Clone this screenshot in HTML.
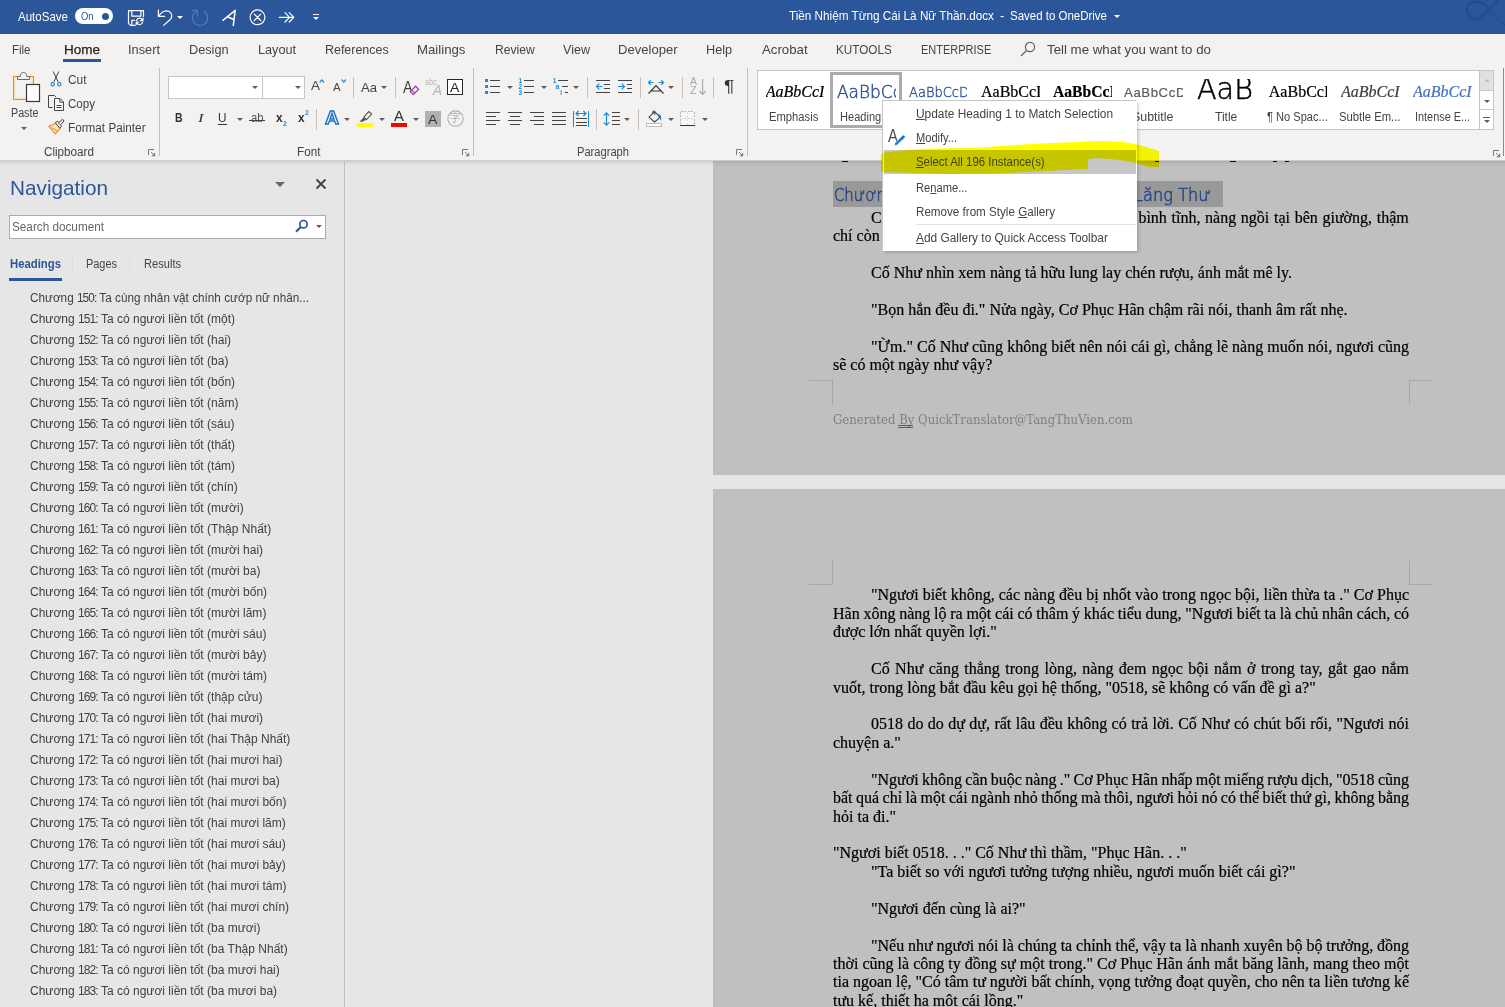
<!DOCTYPE html>
<html lang="vi"><head><meta charset="utf-8"><title>Word</title>
<style>
html,body{margin:0;padding:0}
html{overflow:hidden;width:1505px;height:1007px}
body{width:1505px;height:1007px;overflow:hidden;position:relative;background:#e6e6e6;font-family:"Liberation Sans",sans-serif;font-size:12px;color:#444}
.a{position:absolute}
.t{position:absolute;white-space:nowrap;line-height:16px;height:16px;transform-origin:0 0}
svg{position:absolute;overflow:visible}
#title{left:0;top:0;width:1505px;height:34px;background:#2b579a}
#title .t{color:#fff;font-size:13px}
#ribbon{left:0;top:34px;width:1505px;height:126px;background:#f3f2f1}
#shadow{left:0;top:161px;width:1505px;height:5px;background:linear-gradient(rgba(0,0,0,.115),rgba(0,0,0,.08) 20%,rgba(0,0,0,.048) 40%,rgba(0,0,0,.027) 60%,rgba(0,0,0,.015) 80%,rgba(0,0,0,.004))}
#rline{left:0;top:160px;width:1505px;height:1px;background:#cfcdcb}
.tab{font-size:13.4px;color:#444}
.lbl{font-size:12px;color:#444}
.ic{color:#444}
.pv{line-height:20px;height:20px;color:#000;-webkit-text-stroke:0.2px}
.vsep{position:absolute;width:1px;background:#c2bfbc}
.dd{position:absolute;width:0;height:0;border-left:3px solid transparent;border-right:3px solid transparent;border-top:3px solid #605e5c}
#nav{left:0;top:162px;width:344px;height:845px;background:#e6e6e6;border-right:1px solid #c0c0c0}
.nv{font-size:12px;color:#404040;left:30px;letter-spacing:0.01px}
.nv i{font-style:normal;letter-spacing:-0.9px}
.page{position:absolute;left:713px;width:792px;background:#c0c0c0}
.ln{position:absolute;left:833px;width:576px;height:19px;line-height:19px;font-family:"Liberation Serif",serif;font-size:16px;color:#000;white-space:nowrap;text-align:justify;text-align-last:justify;-webkit-text-stroke:0.2px #000}
.ln.i{left:871px;width:538px}
.ln.e{text-align:left;text-align-last:left}
.hd{font-family:'DejaVu Sans',sans-serif;font-weight:200;font-size:18.4px;line-height:26px;height:26px;color:#264785;-webkit-text-stroke:0.6px #264785}
.ft{font-family:"DejaVu Serif",serif;font-size:12px;color:#7f7f7f}
.crop{position:absolute;border:0 solid #a6a6a6}
#menu{left:882px;top:100px;width:255px;height:151px;background:#fff;box-sizing:border-box;border:1px solid #c6c6c6;border-right-color:#fff;border-bottom-color:#fff;box-shadow:1.5px 1.5px 3px rgba(0,0,0,.2)}
.mi{font-size:12.3px;color:#444;left:916px}
u{text-decoration:underline;text-underline-offset:1px}
</style></head><body>

<!-- ===== TITLE BAR ===== -->
<div id="title" class="a"></div>
<span class="t" style="left: 18px; top: 9.3px; color: rgb(255, 255, 255); font-size: 13px; transform: scaleX(0.887);">AutoSave</span>
<span class="t" style="left: 789px; top: 8.4px; color: rgb(255, 255, 255); font-size: 13px; transform: scaleX(0.901);">Tiền Nhiệm Từng Cái Là Nữ Thần.docx</span>
<span class="t" style="left:1000px;top:8.4px;color:#fff;font-size:13px">-</span>
<span class="t" style="left: 1010px; top: 8.4px; color: rgb(255, 255, 255); font-size: 13px; transform: scaleX(0.883);">Saved to OneDrive</span>

<div class="a" style="left:75px;top:8px;width:38px;height:16px;border-radius:8px;background:#fff"></div>
<span class="t" style="left: 80.7px; top: 8.3px; font-size: 10.5px; color: rgb(43, 87, 154); transform: scaleX(0.899);">On</span>
<div class="a" style="left:102px;top:12.5px;width:7px;height:7px;border-radius:4px;background:#2b579a"></div>
<svg style="left:0;top:0" width="330" height="34" viewBox="0 0 330 34" fill="none" stroke="#fff" stroke-width="1.2" stroke-linecap="round" stroke-linejoin="round">
<path d="M135.2 25.3H130.4L128.5 23.4V10.7H143.5V16.4"></path><path d="M131.8 10.9V16.2H140.9V10.9"></path><path d="M131.8 25V20.3H134.6"></path>
<path d="M136.5 20.4A3.2 3.2 0 0 1 142.6 20.2M143 18V20.6H140.4"></path><path d="M142.7 22.2A3.2 3.2 0 0 1 136.6 22.4M136.2 24.6V22H138.8"></path>
<path d="M158.4 10.2V16.4H164.6"></path><path d="M158.9 16C161 12 165.6 9.6 169.2 11.6C172.6 13.6 172.4 17.4 170 19.8L163.6 25.4"></path>
<path d="M192 10.4H197.5V15.8M197.3 10.8A7.6 7.6 0 1 0 204.3 11.6" stroke="#4f7cb8"></path>
<path d="M222.9 20.3L235.2 10.4L233.3 25.5M227.4 16.8L233.9 19.5" stroke-width="1.5"></path>
<circle cx="257.5" cy="17.3" r="7.4"></circle><path d="M254.3 14.1L260.7 20.5M260.7 14.1L254.3 20.5"></path>
<path d="M279.4 17.3H293.6M285 12.6L289.6 17.3L285 22M289.2 12.6L293.8 17.3L289.2 22"></path>
</svg>
<div class="dd" style="left:176.5px;top:15.5px;border-top-color:#fff"></div>
<div class="a" style="left:313px;top:13.5px;width:6px;height:1px;background:#fff"></div>
<div class="dd" style="left:313px;top:16.5px;border-top-color:#fff"></div>
<div class="dd" style="left:1113.5px;top:15px;border-top-color:#fff"></div>
<svg style="left:0;top:0" width="1505" height="34" viewBox="0 0 1505 34" fill="none" stroke="#254d8e"><path d="M1499 -1C1495 4 1492 7 1489.2 9.3C1485 13.5 1481 19 1476.3 19C1470 19 1466.8 14.5 1466.8 9.5C1466.8 4.5 1471 1.5 1476.3 1.5C1481.5 1.5 1486 5.5 1489.2 9.3" stroke-width="2.4"></path><path d="M1489.2 9.3C1493 14.5 1498 21.5 1506 25.5" stroke-width="1.6"></path></svg><div class="a" style="left:0;top:33px;width:1505px;height:1px;background:#224f98"></div><div class="a" style="left:0;top:34px;width:1505px;height:1px;background:#fbfbfb;z-index:1"></div>
<!-- ===== RIBBON ===== -->
<div id="ribbon" class="a"></div>
<!-- tabs -->
<span class="t tab" style="left: 12px; top: 42.3px; transform: scaleX(0.857);">File</span>
<span class="t tab" style="left: 63.5px; top: 42.3px; color: rgb(34, 34, 34); -webkit-text-stroke: 0.25px rgb(34, 34, 34); transform: scaleX(1.007);">Home</span>
<span class="t tab" style="left: 128px; top: 42.3px; transform: scaleX(0.955);">Insert</span>
<span class="t tab" style="left: 189px; top: 42.3px; transform: scaleX(0.95);">Design</span>
<span class="t tab" style="left: 258px; top: 42.3px; transform: scaleX(0.945);">Layout</span>
<span class="t tab" style="left: 325px; top: 42.3px; transform: scaleX(0.929);">References</span>
<span class="t tab" style="left: 417.3px; top: 42.3px; transform: scaleX(0.987);">Mailings</span>
<span class="t tab" style="left: 495.2px; top: 42.3px; transform: scaleX(0.906);">Review</span>
<span class="t tab" style="left: 563px; top: 42.3px; transform: scaleX(0.938);">View</span>
<span class="t tab" style="left: 618.3px; top: 42.3px; transform: scaleX(0.975);">Developer</span>
<span class="t tab" style="left: 706.2px; top: 42.3px; transform: scaleX(0.951);">Help</span>
<span class="t tab" style="left: 762.1px; top: 42.3px; transform: scaleX(0.988);">Acrobat</span>
<span class="t tab" style="left: 836px; top: 42.3px; transform: scaleX(0.874);">KUTOOLS</span>
<span class="t tab" style="left: 920.5px; top: 42.3px; transform: scaleX(0.821);">ENTERPRISE</span>
<span class="t tab" style="left: 1047.3px; top: 42.3px; transform: scaleX(0.992);">Tell me what you want to do</span>
<div class="a" style="left:63px;top:59px;width:38px;height:3px;background:#2b579a"></div>
<svg style="left:1020px;top:41px" width="16" height="16" viewBox="0 0 16 16"><circle cx="10" cy="6" r="4.6" fill="none" stroke="#605e5c" stroke-width="1.2"></circle><path d="M6.6 9.4L1 15" stroke="#605e5c" stroke-width="1.3"></path></svg>
<!-- /tabs -->
<!-- clipboard -->
<svg style="left:12px;top:71px" width="29" height="32" viewBox="0 0 29 32">
<rect x="1.5" y="5.5" width="20" height="23" fill="#fbe5b8" stroke="#e8873a" stroke-width="1"></rect>
<rect x="3.5" y="7.5" width="16" height="19" fill="#f3f2f1"></rect>
<path d="M5.5 8.5V5.5H8.2C8.2 3 9.6 1.5 11.5 1.5C13.4 1.5 14.8 3 14.8 5.5H17.5V8.5Z" fill="#f3f2f1" stroke="#6a6a6a" stroke-width="1"></path>
<rect x="14.5" y="13.5" width="13" height="17" fill="#fdfdfd" stroke="#3b3a39" stroke-width="1.2"></rect>
</svg>
<span class="t lbl" style="left: 10.6px; top: 104.5px; transform: scaleX(0.893);">Paste</span>
<div class="dd" style="left:21px;top:127px"></div>
<svg style="left:50px;top:71px" width="12" height="16" viewBox="0 0 12 16">
<path d="M3.2 0.5L8.3 11.2M8.8 0.5L3.7 11.2" stroke="#444" stroke-width="1" fill="none"></path>
<circle cx="2.7" cy="13.3" r="1.7" fill="none" stroke="#1e8ad6" stroke-width="1.1"></circle><circle cx="9.3" cy="13.3" r="1.7" fill="none" stroke="#1e8ad6" stroke-width="1.1"></circle>
</svg>
<span class="t lbl" style="left: 67.5px; top: 71.5px; transform: scaleX(0.99);">Cut</span>
<svg style="left:47px;top:94px" width="18" height="18" viewBox="0 0 18 18">
<path d="M5.5 13.5H1.5V1.5H7.5L9 3" fill="none" stroke="#444" stroke-width="1"></path>
<path d="M7.5 4.5H13L16.5 8V16.5H7.5Z" fill="#fafafa" stroke="#444" stroke-width="1"></path>
<path d="M12.8 4.7V8.2H16.3" fill="none" stroke="#444" stroke-width="1"></path>
<path d="M9.5 11.5H14.5M9.5 13.5H14.5" stroke="#444" stroke-width="1"></path>
</svg>
<span class="t lbl" style="left: 67.5px; top: 95.5px; transform: scaleX(0.964);">Copy</span>
<svg style="left:48px;top:118px" width="17" height="17" viewBox="0 0 17 17">
<path d="M0.8 8.5L8 5.2L12.2 10.4L7.2 15.8Z" fill="#fbe5b8" stroke="#e8873a" stroke-width="1.1" stroke-linejoin="round"></path>
<path d="M3 9.3L9 12.8" stroke="#e8873a" stroke-width="1"></path>
<path d="M7.3 4.6L9.6 3.2L13.6 8.4L11.8 10.2Z" fill="#f3f2f1" stroke="#444" stroke-width="1"></path>
<path d="M10.8 4.6L14.6 1.2L16 3L12.6 6.8" fill="#f3f2f1" stroke="#444" stroke-width="1"></path>
</svg>
<span class="t lbl" style="left: 67.5px; top: 119.5px; transform: scaleX(0.977);">Format Painter</span>
<span class="t lbl" style="left: 43.6px; top: 143.5px; transform: scaleX(0.973);">Clipboard</span>
<svg style="left:148px;top:149px" width="8" height="8" viewBox="0 0 8 8"><path d="M0.5 6V0.5H6" fill="none" stroke="#777" stroke-width="1"></path><path d="M7.2 3.4V7.2H3.4Z" fill="#777"></path><path d="M3 3L5.5 5.5" stroke="#777" stroke-width="1"></path></svg>
<div class="vsep" style="left:159px;top:68px;height:88px"></div>
<!-- /clipboard -->
<!-- font -->
<div class="a" style="left:168px;top:76px;width:93px;height:21px;background:#fff;border:1px solid #c6c6c6"></div>
<div class="a" style="left:262px;top:76px;width:41px;height:21px;background:#fff;border:1px solid #c6c6c6"></div>
<div class="dd" style="left:251.5px;top:86px"></div>
<div class="dd" style="left:294.5px;top:86px"></div>
<span class="t ic" style="left: 311px; top: 78px; font-size: 13px; transform: scaleX(1.038);">A</span>
<svg style="left:319px;top:79px" width="6" height="4" viewBox="0 0 6 4"><path d="M0.6 3.5L2.8 0.9L5 3.5" fill="none" stroke="#1e8ad6" stroke-width="1.2"></path></svg>
<span class="t ic" style="left: 333px; top: 79.4px; font-size: 11px; transform: scaleX(1.035);">A</span>
<svg style="left:341px;top:79px" width="6" height="4" viewBox="0 0 6 4"><path d="M0.6 0.5L2.8 3.1L5 0.5" fill="none" stroke="#1e8ad6" stroke-width="1.2"></path></svg>
<div class="vsep" style="left:353px;top:77px;height:21px"></div>
<span class="t ic" style="left: 361.3px; top: 79.7px; font-size: 13.5px; transform: scaleX(0.969);">Aa</span>
<div class="dd" style="left:380.5px;top:86px"></div>
<div class="vsep" style="left:395px;top:77px;height:21px"></div>
<span class="t ic" style="left: 403px; top: 77.7px; font-size: 16px; line-height: 19px; transform: scaleX(0.9);">A</span>
<svg style="left:409px;top:85px" width="11" height="11" viewBox="0 0 11 11"><path d="M1.2 6.6L6.6 1.2L9.6 4.2L4.2 9.6Z" fill="#f3f2f1" stroke="#a040b0" stroke-width="1.3"></path><path d="M2.8 5.2L5.8 8.2" stroke="#a040b0" stroke-width="1.2"></path></svg>
<span class="t" style="left: 424.7px; top: 73.5px; font-size: 8.5px; color: rgb(180, 180, 180); transform: scaleX(0.875);">abc</span>
<span class="t" style="left: 432.5px; top: 82.4px; font-size: 14px; font-style: italic; color: rgb(180, 180, 180); transform: scaleX(0.963);">A</span>
<div class="a" style="left:447px;top:79px;width:14px;height:14px;background:#fff;border:1px solid #262626"></div>
<span class="t ic" style="left: 449.8px; top: 79.5px; font-size: 12.5px; color: rgb(38, 38, 38); transform: scaleX(1.127);">A</span>
<!-- row 2 -->
<span class="t ic" style="left: 175.4px; top: 110px; font-size: 12.6px; font-weight: bold; color: rgb(51, 51, 51); transform: scaleX(0.834);">B</span>
<span class="t ic" style="left: 198.4px; top: 110px; font-size: 13px; font-style: italic; font-family: &quot;Liberation Serif&quot;, serif; color: rgb(51, 51, 51); transform: scaleX(1.289);">I</span>
<span class="t ic" style="left: 218.3px; top: 110px; font-size: 12.6px; color: rgb(51, 51, 51); transform: scaleX(0.933);">U</span>
<div class="a" style="left:218px;top:124px;width:9px;height:1px;background:#333"></div>
<div class="dd" style="left:236.5px;top:118px"></div>
<span class="t ic" style="left: 250.5px; top: 110px; font-size: 12.6px; color: rgb(85, 85, 85); transform: scaleX(0.892);">ab</span>
<div class="a" style="left:249px;top:120px;width:16px;height:1px;background:#444"></div>
<span class="t ic" style="left: 275.8px; top: 109.8px; font-size: 13px; font-weight: bold; color: rgb(51, 51, 51); transform: scaleX(0.912);">x</span>
<span class="t" style="left: 282.8px; top: 116.4px; font-size: 8px; font-weight: bold; color: rgb(30, 138, 214); transform: scaleX(0.853);">2</span>
<span class="t ic" style="left: 297.6px; top: 109.8px; font-size: 13px; font-weight: bold; color: rgb(51, 51, 51); transform: scaleX(0.912);">x</span>
<span class="t" style="left: 304.6px; top: 104.8px; font-size: 8px; font-weight: bold; color: rgb(30, 138, 214); transform: scaleX(0.853);">2</span>
<div class="vsep" style="left:316px;top:109px;height:21px"></div>
<span class="t" style="left: 324.6px; top: 107.4px; font-size: 18.6px; line-height: 22px; font-weight: bold; color: rgb(230, 241, 251); -webkit-text-stroke: 1.3px rgb(26, 111, 196); transform: scaleX(1.042);">A</span>
<div class="dd" style="left:343.5px;top:118px"></div>
<svg style="left:357px;top:110px" width="17" height="18" viewBox="0 0 17 18"><rect x="0" y="13" width="16.2" height="4" fill="#ffff00"></rect><path d="M6.8 7.2L11.8 1.6L14.6 4L9.6 9.6Z" fill="#f3f2f1" stroke="#555" stroke-width="1.1"></path><path d="M6.6 7.4L9.4 9.8L5.4 11.8L2.5 11.8Z" fill="#555"></path></svg>
<div class="dd" style="left:378.5px;top:118px"></div>
<span class="t ic" style="left: 394.2px; top: 107.8px; font-size: 14.5px; color: rgb(51, 51, 51); transform: scaleX(1.034);">A</span>
<div class="a" style="left:391px;top:123px;width:16px;height:4px;background:#ff0000"></div>
<div class="dd" style="left:412.5px;top:118px"></div>
<div class="a" style="left:425px;top:111px;width:16px;height:16px;background:#b1b1b1"></div>
<span class="t ic" style="left: 428.3px; top: 111.6px; font-size: 13px; color: rgb(51, 51, 51); transform: scaleX(1.084);">A</span>
<svg style="left:446.5px;top:110px" width="17" height="17" viewBox="0 0 17 17"><circle cx="8.5" cy="8.6" r="7.7" fill="none" stroke="#b0b0b0" stroke-width="1.1"></circle></svg>
<span class="t" style="left:449.3px;top:110.3px;font-size:11.5px;font-family:'Liberation Sans','Noto Sans CJK SC',sans-serif;color:#b0b0b0">字</span>
<span class="t lbl" style="left: 296.6px; top: 144px; transform: scaleX(0.974);">Font</span>
<svg style="left:462px;top:149px" width="8" height="8" viewBox="0 0 8 8"><path d="M0.5 6V0.5H6" fill="none" stroke="#777" stroke-width="1"></path><path d="M7.2 3.4V7.2H3.4Z" fill="#777"></path><path d="M3 3L5.5 5.5" stroke="#777" stroke-width="1"></path></svg>
<div class="vsep" style="left:473px;top:68px;height:88px"></div>
<!-- /font -->
<!-- para -->
<svg style="left:0;top:0" width="760" height="160" viewBox="0 0 760 160" shape-rendering="crispEdges">
<path d="M490 80.5H500M490 86.5H500M490 92.5H500" stroke="#444" stroke-width="1" fill="none"></path>
<rect x="485" y="79" width="3" height="3" fill="#1e8ad6"></rect>
<rect x="485" y="85" width="3" height="3" fill="#1e8ad6"></rect>
<rect x="485" y="91" width="3" height="3" fill="#1e8ad6"></rect>
<path d="M524 80.5H534M524 86.5H534M524 92.5H534" stroke="#444" stroke-width="1" fill="none"></path>
<path d="M558 80.5H568M562 86.5H568M564.5 92.5H568" stroke="#444" stroke-width="1" fill="none"></path>
<path d="M596 80.5H610M604 84.5H610M604 88.5H610M596 92.5H610" stroke="#444" stroke-width="1" fill="none"></path>
<path d="M618 80.5H632M627 84.5H632M627 88.5H632M618 92.5H632" stroke="#444" stroke-width="1" fill="none"></path>
<path d="M486 112.5H500M486 116.5H496M486 120.5H500M486 124.5H496" stroke="#444" stroke-width="1" fill="none"></path>
<path d="M508 112.5H522M510 116.5H520M508 120.5H522M510 124.5H520" stroke="#444" stroke-width="1" fill="none"></path>
<path d="M530 112.5H544M534 116.5H544M530 120.5H544M534 124.5H544" stroke="#444" stroke-width="1" fill="none"></path>
<path d="M552 112.5H566M552 116.5H566M552 120.5H566M552 124.5H566" stroke="#444" stroke-width="1" fill="none"></path>
<path d="M573.5 111V127M588.5 111V127" stroke="#1e8ad6" stroke-width="1" fill="none"></path>
<path d="M575.5 118.5H587M575.5 122.5H587M575.5 125.5H587" stroke="#444" stroke-width="1" fill="none"></path>
<path d="M611.5 112.5H620M611.5 116.5H620M611.5 120.5H620M611.5 124.5H620" stroke="#444" stroke-width="1" fill="none"></path>
<path d="M680.5 111.5H694.5M680.5 111.5V125M694.5 111.5V125M687.5 112V125M680.5 118.5H694.5" stroke="#b8b8b8" stroke-width="1" fill="none" stroke-dasharray="2 1.5"></path>
<rect x="681" y="112" width="13" height="13" fill="#fafafa" opacity="0.5"></rect>
<path d="M680 125.5H695" stroke="#333" stroke-width="1" fill="none"></path>
<rect x="646.5" y="123.5" width="15" height="3" fill="#fff" stroke="#bdbdbd" stroke-width="1"></rect>
</svg>
<svg style="left:0;top:0" width="760" height="160" viewBox="0 0 760 160">
<path d="M602.5 86.5H596.5M599.3 83.7L596.5 86.5L599.3 89.3" stroke="#1e8ad6" stroke-width="1.2" fill="none"></path>
<path d="M618 86.5H624.5M621.7 83.7L624.5 86.5L621.7 89.3" stroke="#1e8ad6" stroke-width="1.2" fill="none"></path>
<path d="M576 113.5H586M578.6 111L576 113.5L578.6 116M583.4 111L586 113.5L583.4 116" stroke="#1e8ad6" stroke-width="1.2" fill="none"></path>
<path d="M606.5 113V125M603.8 115.6L606.5 112.8L609.2 115.6M603.8 122.4L606.5 125.2L609.2 122.4" stroke="#1e8ad6" stroke-width="1.2" fill="none"></path>
<path d="M653.5 82.5H648.5M650.8 80.2L648.5 82.5L650.8 84.8M658.5 82.5H663.5M661.2 80.2L663.5 82.5L661.2 84.8" stroke="#1e8ad6" stroke-width="1.2" fill="none"></path>
<path d="M648.5 93.5L656 85.5L663.5 93.5M651.3 91H660.7" stroke="#333" stroke-width="1.1" fill="none" stroke-linejoin="miter"></path>
<path d="M702.6 79V94.2M699.4 91L702.6 94.4L705.8 91" stroke="#a8a8a8" stroke-width="1.1" fill="none"></path>
<path d="M649 117.2L654.6 111.6L660.2 117.2L654.6 122Z" fill="#f3f2f1" stroke="#444" stroke-width="1.1" stroke-linejoin="round"></path>
<path d="M654.8 115V111.8C654.8 110.4 652.8 110.4 652.8 111.8V114" fill="none" stroke="#444" stroke-width="1"></path>
<path d="M658.6 114.2C661.2 114.6 661.6 117.6 661 121C660.2 118.6 659.6 117.2 658 116.4Z" fill="#1a6fc4"></path>
</svg>
<span class="t" style="left:518.6px;top:73.2px;font-size:6.5px;font-weight:bold;color:#1e8ad6">1</span><span class="t" style="left:518.6px;top:79.2px;font-size:6.5px;font-weight:bold;color:#1e8ad6">2</span><span class="t" style="left:518.6px;top:85.2px;font-size:6.5px;font-weight:bold;color:#1e8ad6">3</span>
<span class="t" style="left:552.8px;top:73.2px;font-size:6.5px;font-weight:bold;color:#1e8ad6">1</span><span class="t" style="left:555.4px;top:79px;font-size:7px;font-weight:bold;color:#1e8ad6">a</span><span class="t" style="left:560.2px;top:85.2px;font-size:6.5px;font-weight:bold;color:#1e8ad6">i</span>
<span class="t" style="left: 689.8px; top: 73.8px; font-size: 10px; color: rgb(168, 168, 168); transform: scaleX(1.049);">A</span><span class="t" style="left: 690px; top: 83.2px; font-size: 10px; color: rgb(168, 168, 168); transform: scaleX(1.08);">Z</span>
<span class="t" style="left: 723.6px; top: 77px; font-size: 17px; line-height: 20px; height: 20px; color: rgb(51, 51, 51); transform: scaleX(1.138);">¶</span>
<div class="dd" style="left:506.5px;top:86px"></div>
<div class="dd" style="left:540.5px;top:86px"></div>
<div class="dd" style="left:572.5px;top:86px"></div>
<div class="dd" style="left:667.5px;top:86px"></div>
<div class="dd" style="left:623.5px;top:118px"></div>
<div class="dd" style="left:667.5px;top:118px"></div>
<div class="dd" style="left:701.5px;top:118px"></div>
<div class="vsep" style="left:587px;top:77px;height:21px"></div>
<div class="vsep" style="left:640px;top:77px;height:21px"></div>
<div class="vsep" style="left:682px;top:77px;height:21px"></div>
<div class="vsep" style="left:713px;top:77px;height:21px"></div>
<div class="vsep" style="left:596px;top:109px;height:21px"></div>
<div class="vsep" style="left:638px;top:109px;height:21px"></div>
<span class="t lbl" style="left: 576.7px; top: 144px; transform: scaleX(0.928);">Paragraph</span>
<svg style="left:736px;top:149px" width="8" height="8" viewBox="0 0 8 8"><path d="M0.5 6V0.5H6" fill="none" stroke="#777" stroke-width="1"></path><path d="M7.2 3.4V7.2H3.4Z" fill="#777"></path><path d="M3 3L5.5 5.5" stroke="#777" stroke-width="1"></path></svg>
<div class="vsep" style="left:747px;top:68px;height:88px"></div>
<!-- /para -->
<!-- styles -->
<div class="a" style="left:757px;top:70px;width:735px;height:58px;background:#fff;border:1px solid #c6c6c6"></div>
<div class="a" style="left:1479px;top:70px;width:13px;height:20px;background:#e1e1e1;border:1px solid #c6c6c6"></div>
<div class="a" style="left:1479px;top:90px;width:13px;height:19px;background:#fff;border:1px solid #c6c6c6"></div>
<div class="a" style="left:1479px;top:109px;width:13px;height:19px;background:#fff;border:1px solid #c6c6c6"></div>
<div class="a" style="left:1483.5px;top:79px;width:0;height:0;border-left:3px solid transparent;border-right:3px solid transparent;border-bottom:3px solid #c0c0c0"></div>
<div class="dd" style="left:1483.5px;top:100px"></div>
<div class="a" style="left:1483px;top:117px;width:7px;height:1px;background:#605e5c"></div>
<div class="dd" style="left:1483.5px;top:120px"></div>
<div class="a" style="left:830px;top:72px;width:66px;height:50px;border:3px solid #ababab"></div>
<div class="a" style="left:765.7px;top:78px;width:58.5px;height:26px;overflow:hidden"><span class="t pv" style="left:0;top:4px;font-family:'Liberation Serif',serif;font-style:italic;font-size:16px">AaBbCcI</span></div>
<div class="a" style="left:837px;top:78px;width:58.5px;height:26px;overflow:hidden"><span class="t pv" style="left: 0px; top: 4px; font-family: &quot;DejaVu Sans&quot;, sans-serif; font-weight: 200; font-size: 17.3px; color: rgb(47, 84, 150); -webkit-text-stroke: 0.5px rgb(47, 84, 150); transform: scaleX(0.981);">AaBbCc</span></div>
<div class="a" style="left:908.6px;top:78px;width:58.5px;height:26px;overflow:hidden"><span class="t pv" style="left: 0px; top: 4px; font-family: &quot;DejaVu Sans&quot;, sans-serif; font-weight: 200; font-size: 13.9px; color: rgb(47, 84, 150); -webkit-text-stroke: 0.4px rgb(47, 84, 150); transform: scaleX(0.938);">AaBbCcD</span></div>
<div class="a" style="left:981px;top:78px;width:58.5px;height:26px;overflow:hidden"><span class="t pv" style="left:0;top:4px;font-family:'Liberation Serif',serif;font-size:16px;color:#000">AaBbCcI</span></div>
<div class="a" style="left:1053px;top:78px;width:58.5px;height:26px;overflow:hidden"><span class="t pv" style="left: 0px; top: 4px; font-family: &quot;Liberation Serif&quot;, serif; font-weight: bold; font-size: 16px; color: rgb(0, 0, 0); transform: scaleX(0.976);">AaBbCcI</span></div>
<div class="a" style="left:1124.4px;top:78px;width:58.5px;height:26px;overflow:hidden"><span class="t pv" style="left: 0px; top: 4.6px; font-size: 13px; color: rgb(90, 90, 90); letter-spacing: 0.6px; transform: scaleX(1.012);">AaBbCcD</span></div>
<div class="a" style="left:1196.6px;top:78.8px;width:58.5px;height:24px;overflow:hidden"><span class="t" style="left: 0px; top: -9.5px; font-family: &quot;DejaVu Sans&quot;, sans-serif; font-weight: 200; font-size: 31px; line-height: 38px; height: 38px; color: rgb(0, 0, 0); -webkit-text-stroke: 0.5px rgb(0, 0, 0); transform: scaleX(0.925);">AaB</span></div>
<div class="a" style="left:1268.8px;top:78px;width:58.5px;height:26px;overflow:hidden"><span class="t pv" style="left:0;top:4px;font-family:'Liberation Serif',serif;font-size:16px;color:#000">AaBbCcI</span></div>
<div class="a" style="left:1341px;top:78px;width:58.5px;height:26px;overflow:hidden"><span class="t pv" style="left:0;top:4px;font-family:'Liberation Serif',serif;font-style:italic;font-size:16px;color:#404040">AaBbCcI</span></div>
<div class="a" style="left:1413px;top:78px;width:58.5px;height:26px;overflow:hidden"><span class="t pv" style="left:0;top:4px;font-family:'Liberation Serif',serif;font-style:italic;font-size:16px;color:#4472c4">AaBbCcI</span></div>
<span class="t lbl" style="left: 769.4px; top: 109px; transform: scaleX(0.936);">Emphasis</span>
<span class="t lbl" style="left: 839.6px; top: 109px; transform: scaleX(0.923);">Heading 1</span>
<span class="t lbl" style="left: 1132.4px; top: 109px; transform: scaleX(1.034);">Subtitle</span>
<span class="t lbl" style="left: 1215px; top: 109px; transform: scaleX(1.003);">Title</span>
<span class="t lbl" style="left: 1267px; top: 109px; transform: scaleX(0.924);">¶ No Spac...</span>
<span class="t lbl" style="left: 1339px; top: 109px; transform: scaleX(0.941);">Subtle Em...</span>
<span class="t lbl" style="left: 1414.5px; top: 109px; transform: scaleX(0.908);">Intense E...</span>
<svg style="left:1493px;top:150px" width="8" height="8" viewBox="0 0 8 8"><path d="M0.5 6V0.5H6" fill="none" stroke="#777" stroke-width="1"></path><path d="M7.2 3.4V7.2H3.4Z" fill="#777"></path><path d="M3 3L5.5 5.5" stroke="#777" stroke-width="1"></path></svg>
<div class="vsep" style="left:1503px;top:68px;height:88px;background:#8a8a8a"></div>
<!-- /styles -->

<!-- ===== NAV ===== -->
<div id="nav" class="a"></div>
<span class="t" style="left: 10px; top: 174px; font-size: 21px; line-height: 28px; height: 28px; color: rgb(43, 87, 154); transform: scaleX(0.988);">Navigation</span>
<div class="a" style="left:275px;top:182px;width:0;height:0;border-left:5px solid transparent;border-right:5px solid transparent;border-top:5px solid #666"></div>
<svg style="left:316px;top:179px" width="10" height="10" viewBox="0 0 10 10"><path d="M0.5 0.5L9.5 9.5M9.5 0.5L0.5 9.5" stroke="#444" stroke-width="1.9" fill="none"></path></svg>
<div class="a" style="left:9px;top:215px;width:315px;height:22px;background:#fff;border:1px solid #ababab"></div>
<span class="t" style="left: 12px; top: 219px; font-size: 12px; color: rgb(102, 102, 102); transform: scaleX(0.978);">Search document</span>
<svg style="left:295px;top:219px" width="14" height="14" viewBox="0 0 14 14"><circle cx="8.5" cy="5.2" r="3.7" fill="none" stroke="#2b579a" stroke-width="1.7"></circle><path d="M5.8 8L1 12.8" stroke="#2b579a" stroke-width="2" fill="none"></path></svg>
<div class="dd" style="left:316px;top:225px"></div>
<span class="t" style="left: 10px; top: 256px; font-size: 12.5px; font-weight: bold; color: rgb(43, 87, 154); transform: scaleX(0.906);">Headings</span>
<div class="a" style="left:9px;top:278px;width:53px;height:3px;background:#2b579a"></div>
<div class="a" style="left:72px;top:253px;width:1px;height:19px;background:#dedede"></div><div class="a" style="left:129px;top:253px;width:1px;height:19px;background:#dedede"></div>
<span class="t" style="left: 86px; top: 256px; font-size: 12.5px; transform: scaleX(0.874);">Pages</span>
<span class="t" style="left: 144px; top: 256px; font-size: 12.5px; transform: scaleX(0.888);">Results</span>
<span class="t nv" style="top: 290px; transform: scaleX(0.978);">Chương <i>150:</i> Ta cùng nhân vật chính cướp nữ nhân...</span>
<span class="t nv" style="top:311px">Chương <i>151:</i> Ta có ngươi liền tốt (một)</span>
<span class="t nv" style="top:332px">Chương <i>152:</i> Ta có ngươi liền tốt (hai)</span>
<span class="t nv" style="top:353px">Chương <i>153:</i> Ta có ngươi liền tốt (ba)</span>
<span class="t nv" style="top:374px">Chương <i>154:</i> Ta có ngươi liền tốt (bốn)</span>
<span class="t nv" style="top:395px">Chương <i>155:</i> Ta có ngươi liền tốt (năm)</span>
<span class="t nv" style="top:416px">Chương <i>156:</i> Ta có ngươi liền tốt (sáu)</span>
<span class="t nv" style="top:437px">Chương <i>157:</i> Ta có ngươi liền tốt (thất)</span>
<span class="t nv" style="top:458px">Chương <i>158:</i> Ta có ngươi liền tốt (tám)</span>
<span class="t nv" style="top:479px">Chương <i>159:</i> Ta có ngươi liền tốt (chín)</span>
<span class="t nv" style="top:500px">Chương <i>160:</i> Ta có ngươi liền tốt (mười)</span>
<span class="t nv" style="top:521px">Chương <i>161:</i> Ta có ngươi liền tốt (Thập Nhất)</span>
<span class="t nv" style="top:542px">Chương <i>162:</i> Ta có ngươi liền tốt (mười hai)</span>
<span class="t nv" style="top:563px">Chương <i>163:</i> Ta có ngươi liền tốt (mười ba)</span>
<span class="t nv" style="top:584px">Chương <i>164:</i> Ta có ngươi liền tốt (mười bốn)</span>
<span class="t nv" style="top:605px">Chương <i>165:</i> Ta có ngươi liền tốt (mười lăm)</span>
<span class="t nv" style="top:626px">Chương <i>166:</i> Ta có ngươi liền tốt (mười sáu)</span>
<span class="t nv" style="top:647px">Chương <i>167:</i> Ta có ngươi liền tốt (mười bảy)</span>
<span class="t nv" style="top:668px">Chương <i>168:</i> Ta có ngươi liền tốt (mười tám)</span>
<span class="t nv" style="top:689px">Chương <i>169:</i> Ta có ngươi liền tốt (thập cửu)</span>
<span class="t nv" style="top:710px">Chương <i>170:</i> Ta có ngươi liền tốt (hai mươi)</span>
<span class="t nv" style="top:731px">Chương <i>171:</i> Ta có ngươi liền tốt (hai Thập Nhất)</span>
<span class="t nv" style="top:752px">Chương <i>172:</i> Ta có ngươi liền tốt (hai mươi hai)</span>
<span class="t nv" style="top:773px">Chương <i>173:</i> Ta có ngươi liền tốt (hai mươi ba)</span>
<span class="t nv" style="top:794px">Chương <i>174:</i> Ta có ngươi liền tốt (hai mươi bốn)</span>
<span class="t nv" style="top:815px">Chương <i>175:</i> Ta có ngươi liền tốt (hai mươi lăm)</span>
<span class="t nv" style="top:836px">Chương <i>176:</i> Ta có ngươi liền tốt (hai mươi sáu)</span>
<span class="t nv" style="top:857px">Chương <i>177:</i> Ta có ngươi liền tốt (hai mươi bảy)</span>
<span class="t nv" style="top:878px">Chương <i>178:</i> Ta có ngươi liền tốt (hai mươi tám)</span>
<span class="t nv" style="top:899px">Chương <i>179:</i> Ta có ngươi liền tốt (hai mươi chín)</span>
<span class="t nv" style="top:920px">Chương <i>180:</i> Ta có ngươi liền tốt (ba mươi)</span>
<span class="t nv" style="top:941px">Chương <i>181:</i> Ta có ngươi liền tốt (ba Thập Nhất)</span>
<span class="t nv" style="top:962px">Chương <i>182:</i> Ta có ngươi liền tốt (ba mươi hai)</span>
<span class="t nv" style="top:983px">Chương <i>183:</i> Ta có ngươi liền tốt (ba mươi ba)</span>

<!-- ===== DOC ===== -->
<div class="page" style="top:160px;height:315px"></div>
<div class="a" style="left:833px;top:181px;width:390px;height:26px;background:#999"></div>
<span class="t hd" style="left: 833.5px; top: 181.5px; transform: scaleX(0.807);">Chương 196: Phiên ngoại Cơ Phục Hãn,</span>
<span class="t hd" style="left: 1134px; top: 181.5px; transform: scaleX(0.882);">Lăng Thư</span>
<div class="ln i e" style="top:207.6px;width:12px">C</div><div class="ln e" style="top:207.6px;left:890px;width:240px">ố Như nhìn thấy Cơ Phục Hãn vẫn rất</div>
<div class="ln " style="top: 207.6px; left: 1138.4px; width: 270.3px;">bình tĩnh, nàng ngồi tại bên giường, thậm</div>
<div class="ln e" style="top:226.1px">chí còn có tâm tình uống rượu.</div>
<div class="ln i e" style="top:262.9px">Cố Như nhìn xem nàng tả hữu lung lay chén rượu, ánh mắt mê ly.</div>
<div class="ln i e" style="top:299.7px">"Bọn hắn đều đi." Nửa ngày, Cơ Phục Hãn chậm rãi nói, thanh âm rất nhẹ.</div>
<div class="ln i" style="top: 336.6px;">"Ừm." Cố Như cũng không biết nên nói cái gì, chẳng lẽ nàng muốn nói, ngươi cũng</div>
<div class="ln e" style="top:355.0px">sẽ có một ngày như vậy?</div>
<div class="crop" style="left:809px;top:380px;width:23px;height:23px;border-right-width:1px;border-top-width:1px"></div>
<div class="crop" style="left:1409px;top:380px;width:23px;height:23px;border-left-width:1px;border-top-width:1px"></div>
<span class="t ft" style="left: 833px; top: 411.8px; transform: scaleX(0.975);">Generated By QuickTranslator@TangThuVien.com</span><div class="a" style="left:898px;top:425px;width:15px;height:1px;background:#2f5fd0"></div><div class="a" style="left:898px;top:427px;width:15px;height:1px;background:#2f5fd0"></div>
<div class="page" style="top:489px;height:518px"></div>
<div class="ln i" style="top: 585.3px;">"Ngươi biết không, các nàng đều bị nhốt vào trong ngọc bội, liền thừa ta ." Cơ Phục</div>
<div class="ln " style="top: 603.8px; word-spacing: -0.25px;">Hãn xông nàng lộ ra một cái có thâm ý khác tiểu dung, "Ngươi biết ta là chủ nhân cách, có</div>
<div class="ln e" style="top:622.2px">được lớn nhất quyền lợi."</div>
<div class="ln i" style="top: 659.1px;">Cố Như căng thẳng trong lòng, nàng đem ngọc bội nắm ở trong tay, gắt gao nắm</div>
<div class="ln e" style="top:677.5px">vuốt, trong lòng bắt đầu kêu gọi hệ thống, "0518, sẽ không có vấn đề gì a?"</div>
<div class="ln i" style="top: 714.4px;">0518 do do dự dự, rất lâu đều không có trả lời. Cố Như có chút bối rối, "Ngươi nói</div>
<div class="ln e" style="top:732.8px">chuyện a."</div>
<div class="ln i" style="top: 769.6px; word-spacing: -0.67px;">"Ngươi không cần buộc nàng ." Cơ Phục Hãn nhấp một miếng rượu dịch, "0518 cũng</div>
<div class="ln " style="top: 788.1px; word-spacing: -0.53px;">bất quá chỉ là một cái ngành nhỏ thống mà thôi, ngươi hỏi nó có thể biết thứ gì, không bằng</div>
<div class="ln e" style="top:806.5px">hỏi ta đi."</div>
<div class="ln e" style="top:843.4px">"Ngươi biết 0518. . ." Cố Như thì thầm, "Phục Hãn. . ."</div>
<div class="ln i e" style="top:861.8px">"Ta biết so với ngươi tưởng tượng nhiều, ngươi muốn biết cái gì?"</div>
<div class="ln i e" style="top:898.7px">"Ngươi đến cùng là ai?"</div>
<div class="ln i" style="top: 935.5px; word-spacing: -0.15px;">"Nếu như ngươi nói là chúng ta chỉnh thể, vậy ta là nhanh xuyên bộ bộ trưởng, đồng</div>
<div class="ln " style="top: 953.9px;">thời cũng là công ty đồng sự một trong." Cơ Phục Hãn ánh mắt băng lãnh, mang theo một</div>
<div class="ln " style="top: 972.4px; word-spacing: -0.02px;">tia ngoan lệ, "Có tâm tư người bất chính, vọng tưởng đoạt quyền, cho nên ta liền tương kế</div>
<div class="ln e" style="top:990.8px">tựu kế, thiết hạ một cái lồng."</div>
<div class="crop" style="left:809px;top:561px;width:23px;height:23px;border-right-width:1px;border-bottom-width:1px"></div>
<div class="crop" style="left:1409px;top:561px;width:23px;height:23px;border-left-width:1px;border-bottom-width:1px"></div>


<div class="a" style="left:842px;top:161px;width:6px;height:1.25px;background:#0a0a0a"></div><div class="a" style="left:1155px;top:161px;width:4px;height:1.25px;background:#0a0a0a"></div><div class="a" style="left:1230px;top:161px;width:6px;height:1.25px;background:#0a0a0a"></div><div class="a" style="left:1273px;top:161px;width:4.2px;height:1.25px;background:#0a0a0a"></div><div class="a" style="left:1285px;top:161px;width:3.5px;height:1.25px;background:#0a0a0a"></div>
<div id="rline" class="a"></div><div id="shadow" class="a"></div>
<!-- ===== MENU ===== -->
<div id="menu" class="a"></div>
<div class="a" style="left:884px;top:150px;width:252px;height:24px;background:#c6c6c6"></div>
<span class="t mi" style="top: 105.5px; transform: scaleX(0.967);"><u>U</u>pdate Heading 1 to Match Selection</span>
<span class="t mi" style="top: 129.5px; transform: scaleX(0.9);"><u>M</u>odify...</span>
<span class="t mi" style="top: 153.5px; transform: scaleX(0.927);"><u>S</u>elect All 196 Instance(s)</span>
<span class="t mi" style="top: 179.5px; transform: scaleX(0.907);">Re<u>n</u>ame...</span>
<span class="t mi" style="top: 203.5px; transform: scaleX(0.946);">Remove from Style <u>G</u>allery</span>
<span class="t mi" style="top: 229.5px; transform: scaleX(0.966);"><u>A</u>dd Gallery to Quick Access Toolbar</span>
<div class="a" style="left:916px;top:224px;width:220px;height:1px;background:#e1e1e1"></div>
<span class="t" style="left: 888px; top: 126.2px; font-size: 18px; line-height: 20px; height: 20px; color: rgb(74, 74, 74); transform: scaleX(0.816);">A</span>
<svg style="left:888px;top:128px" width="18" height="19" viewBox="0 0 18 19"><path d="M6.3 17.7L9.2 17.1L16.9 9.65C18 8.4 15.9 6.3 14.7 7.35L7 14.8Z" fill="#1a6fc4" stroke="#fff" stroke-width="0.7"></path><path d="M8.6 14.3L9.9 15.6M10.4 12.6L11.7 13.9M12.2 10.9L13.5 12.2" stroke="#cfe3f7" stroke-width="0.5"></path></svg>
<svg style="left:0;top:0;mix-blend-mode:multiply" width="1505" height="200" viewBox="0 0 1505 200"><path d="M880.8 154.8 L884 152.5 L900 150.8 L920 148.8 L980 147.7 L1000 146 L1050 143.1 L1080 142.1 L1091 141 L1106 141 L1123 142 L1135 144.1 L1148 147.5 L1159 150.9 L1159 166.9 L1148 166.9 L1137 163.3 L1130 161.8 L1118 159.7 L1103 158.5 L1095 157.9 L1088 159.3 L1088 168.9 L1050 170.7 L1000 173.4 L950 174 L900 172.4 L881 171.9Z" fill="#ffff00"></path></svg>


</body></html>
